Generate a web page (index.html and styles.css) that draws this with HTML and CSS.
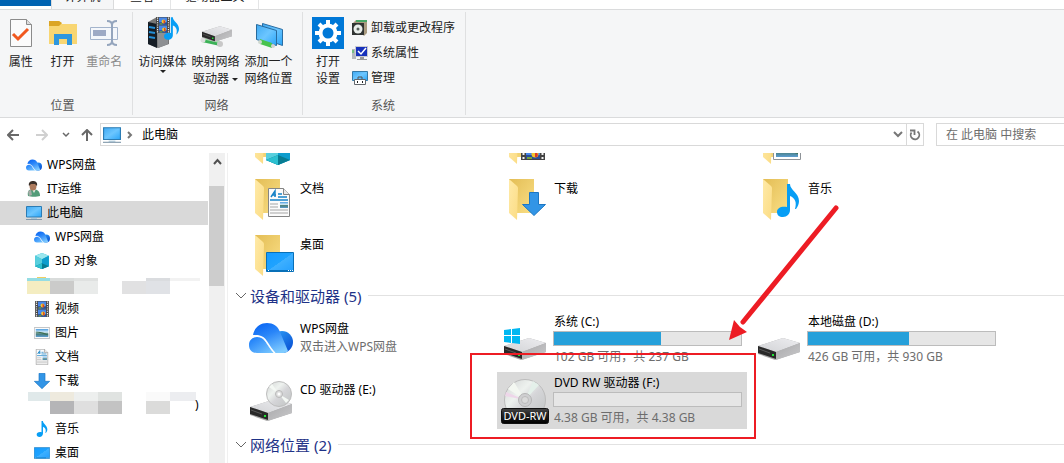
FILE: index.html
```html
<!DOCTYPE html>
<html lang="zh-CN">
<head>
<meta charset="utf-8">
<title>此电脑</title>
<link rel="stylesheet" href="styles.css">
</head>
<body>
<svg class="defs" width="0" height="0" aria-hidden="true">
  <defs>
    <linearGradient id="gSky" x1="0" y1="0" x2="1" y2="1"><stop offset="0" stop-color="#3fa9f2"/><stop offset=".5" stop-color="#6cc6ff"/><stop offset="1" stop-color="#2aa5f8"/></linearGradient>
    <linearGradient id="gCloudA" x1=".2" y1="0" x2=".7" y2="1"><stop offset="0" stop-color="#0a66f4"/><stop offset=".4" stop-color="#2a86f8"/><stop offset="1" stop-color="#7fcbff"/></linearGradient>
    <linearGradient id="gCloudB" x1="0" y1="0" x2="1" y2="1"><stop offset="0" stop-color="#2fa5fa"/><stop offset="1" stop-color="#0648d0"/></linearGradient>
    <linearGradient id="gCloudC" x1="0" y1="0" x2="1" y2="1"><stop offset="0" stop-color="#1678f8"/><stop offset="1" stop-color="#7ccaff"/></linearGradient>
    <linearGradient id="gBack" x1="0" y1="0" x2="1" y2="1"><stop offset="0" stop-color="#e3bd55"/><stop offset="1" stop-color="#fadf86"/></linearGradient>
    <linearGradient id="gFlap" x1="0" y1="0" x2="1" y2="1"><stop offset="0" stop-color="#ffeaa8"/><stop offset="1" stop-color="#fbdc84"/></linearGradient>
    <linearGradient id="gTop" x1="0" y1="1" x2="1" y2="0"><stop offset="0" stop-color="#d2d3d6"/><stop offset="1" stop-color="#ededf0"/></linearGradient>
    <linearGradient id="gSide" x1="0" y1="0" x2="1" y2="1"><stop offset="0" stop-color="#a9a9ab"/><stop offset="1" stop-color="#c9c9cb"/></linearGradient>
    <linearGradient id="gDisc" x1="0" y1="0" x2="1" y2="1"><stop offset="0" stop-color="#d0d2d2"/><stop offset=".35" stop-color="#eef2ef"/><stop offset=".55" stop-color="#d5d5d8"/><stop offset="1" stop-color="#bfc3c2"/></linearGradient>
    <linearGradient id="gDesk" x1="0" y1="0" x2="1" y2="1"><stop offset="0" stop-color="#159bff"/><stop offset=".5" stop-color="#1fa3ff"/><stop offset=".51" stop-color="#3eb0ff"/><stop offset="1" stop-color="#239fff"/></linearGradient>
    <linearGradient id="gPic" x1="0" y1="0" x2="0" y2="1"><stop offset="0" stop-color="#4b9cdf"/><stop offset=".4" stop-color="#d8eefa"/><stop offset=".6" stop-color="#467a74"/><stop offset="1" stop-color="#5d9ed2"/></linearGradient>
    <linearGradient id="gBadge" x1="0" y1="0" x2="0" y2="1"><stop offset="0" stop-color="#454545"/><stop offset=".5" stop-color="#1d1d1d"/><stop offset="1" stop-color="#000"/></linearGradient>
  </defs>
  <symbol id="pc" viewBox="0 0 16 16"><path d="M.5 1.500h15v10.500H.5z" fill="url(#gSky)" stroke="#2b7cb4"/><path d="M5 13h6v1H5z" fill="#a8c8dc"/><path d="M0 14.500h16" stroke="#8098ab"/></symbol>
  <symbol id="cloud" viewBox="0 0 44 30"><circle cx="33" cy="19" r="11" fill="url(#gCloudB)"/><path d="M4 12C5 5 11 0 18 0c6 0 11 3 13 9l8 19c-2 2-4 2-6 2h-7c-3-2-5-5-7-8-3-5-6-10-15-10z" fill="url(#gCloudA)"/><path d="M8 14c5 0 8 3 10 7 2 3 4 6 7 9H8c-5 0-8-3-8-8s4-8 8-8z" fill="url(#gCloudC)"/><path d="M1 15c7-4 13-2 16 3 3 4 5 9 9 12" fill="none" stroke="#fff" stroke-width="1.500"/></symbol>
  <symbol id="person" viewBox="0 0 16 16"><path d="M2 15c-1-5 1-7 5-7s7 2 7 7c-3 1-9 1-12 0z" fill="#539c79"/><path d="M6 8l2 4 2-4z" fill="#e9efe9"/><ellipse cx="7" cy="5" rx="3.500" ry="4.500" fill="#ad7a5c"/><path d="M3 5C2 1 5 0 7 0s5 1 4 5L9 3 5 3z" fill="#3b3029"/><path d="M2 10l3-1 1 5-3 1z" fill="#a6aca8"/></symbol>
  <symbol id="cube" viewBox="0 0 24 28"><path d="M12 0l12 5v18l-12 5L0 23V5z" fill="#1db3cf"/><path d="M12 0l12 5-12 6L0 5z" fill="#9be7ee"/><path d="M0 5l12 6v17L0 23z" fill="#58cfdd"/><path d="M24 5l-12 6v17l12-5z" fill="#0e9dcd"/><path d="M12 18l12 5-12 5-12-5z" fill="#087c92"/><path d="M12 18v10L0 23z" fill="#2cc0d0"/></symbol>
  <symbol id="film" viewBox="0 0 24 28"><path d="M0 0h24v28H0z" fill="#444"/><path d="M5 1h14v12H5zM5 15h14v12H5z" fill="#4787ea"/><path d="M5 9h14v4H5zM5 23h14v4H5z" fill="#294c9a"/><circle cx="13" cy="8" r="3.500" fill="#f2c42e"/><path d="M13 5v6h2c2-2 0-5-2-6z" fill="#d93a28"/><circle cx="14" cy="22" r="3.500" fill="#f2c42e"/><path d="M14 19v6h2c2-2 0-5-2-6z" fill="#d93a28"/><path d="M6 11h5v2H6zM6 25h5v2H6z" fill="#74a33b"/><path d="M2.500 1v27M21.500 1v27" stroke="#f2f2f2" stroke-width="2" stroke-dasharray="2 2"/></symbol>
  <symbol id="picture" viewBox="0 0 28 20"><path d="M.5.500h27v19H.5z" fill="#fff" stroke="#8e9398"/><path d="M3 3h22v14H3z" fill="url(#gPic)"/><path d="M3 9c6 0 12 2 22 5v-1C18 9 9 7 3 8z" fill="#3d6e50"/></symbol>
  <symbol id="doc" viewBox="0 0 22 29"><path d="M.5.500h15l6 6v22H.500z" fill="#fbfbfb" stroke="#858585"/><path d="M15.500.500v6h6" fill="#e7e7e7" stroke="#858585"/><path d="M3 9l4-6v6M4 7h4" fill="none" stroke="#1683c7" stroke-width="1.500"/><path d="M10 6h4M10 9h9M2 12h18" stroke="#1683c7" stroke-width="1.300"/><path d="M2 16h8M2 19h8M2 22h18M2 25h18" stroke="#a5a5a5"/><path d="M12 14h8v6h-8z" fill="url(#gPic)"/></symbol>
  <symbol id="down" viewBox="0 0 24 24"><path d="M7.500.500h9v12h7L12 23.500.500 12.500h7z" fill="#3295e6" stroke="#1c77c4"/></symbol>
  <symbol id="note" viewBox="0 0 22 33"><path d="M10 0h3c0 6 9 9 9 17 0 3-1 5-3 8h-1c2-7 0-11-5-13v14c0 4-3 7-7 7-4 0-6-2-6-5 0-4 4-6 10-5z" fill="#079ef5"/></symbol>
  <symbol id="desktop" viewBox="0 0 28 20"><path d="M.5.500h27v19H.5z" fill="url(#gDesk)" stroke="#0870b8"/><path d="M1 18.500h26" stroke="#0870b8"/><path d="M2 18.500h1M22 18.500h1M24 18.500h1M26 18.500h1" stroke="#fff"/></symbol>
  <symbol id="folder" viewBox="0 0 48 48"><path d="M6 4h25v34H6z" fill="url(#gBack)"/><path d="M6 4l8 7c1 1 1 2 1 3l-1 31-8-7z" fill="url(#gFlap)"/></symbol>
  <symbol id="drive" viewBox="0 0 42 22"><path d="M0 8L25 0l17 5v9l-25 8-17-6z" fill="#aaa"/><path d="M0 8L25 0l17 5-24 9z" fill="url(#gTop)"/><path d="M18 14l24-9v9l-24 8z" fill="url(#gSide)"/><path d="M0 8l18 6v7L0 15z" fill="#292929"/><path d="M1 11l11 4" stroke="#595959"/><path d="M14 16h2v2h-2z" fill="#20e535"/></symbol>
  <symbol id="chev" viewBox="0 0 12 8"><path d="M1 1l5 5 5-5" fill="none" stroke="currentColor"/></symbol>
  <symbol id="arrow" viewBox="0 0 12 12"><path d="M12 6H1M6 1L1 6l5 5" fill="none" stroke="currentColor" stroke-width="2"/></symbol>
</svg>

<header class="tabs">
  <button class="tab file" aria-label="文件"></button>
  <button class="tab active">计算机</button>
  <button class="tab view">查看</button>
  <button class="tab tools">驱动器工具</button>
</header>

<section class="ribbon">
  <div class="group location">
    <div class="tools-row">
      <button class="big">
        <svg width="32" height="32" viewBox="0 0 32 32"><path d="M5.500 2.500h16l5 5v22h-21z" fill="#fbfbfb" stroke="#8b8b8b"/><path d="M21.500 2.500v5h5" fill="#ddd" stroke="#8b8b8b"/><path d="M8 17l5 5L23 12" fill="none" stroke="#f1581e" stroke-width="3"/></svg>
        <span>属性</span></button>
      <button class="big">
        <svg width="32" height="32" viewBox="0 0 32 32"><path d="M2 4h10l3 3h15v20H2z" fill="#f8d673"/><path d="M2 4h10l3 2-3 3H2z" fill="#dba525"/><path d="M7 28V17h18v11h-5v-6h-8v6z" fill="#2e97df"/></svg>
        <span>打开</span></button>
      <button class="big muted">
        <svg width="32" height="32" viewBox="0 0 32 32"><path d="M2.500 10.500h27v12h-27z" fill="#f4f7fb" stroke="#a3b4cc"/><path d="M5 13h13v6H5z" fill="#9daac5"/><path d="M19 4c3 0 5 1 5 4v16c0 3-2 4-5 4M29 4c-3 0-5 1-5 4v16c0 3 2 4 5 4" fill="none" stroke="#94a5bd" stroke-width="2"/></svg>
        <span>重命名</span></button>
    </div>
    <div class="group-name">位置</div>
  </div>
  <div class="group network">
    <div class="tools-row">
      <button class="big">
        <svg width="32" height="32" viewBox="0 0 32 32"><path d="M1 5l9-5 12 5v22l-11 4-10-4z" fill="#777"/><path d="M1 5l9 2v24l-9-4z" fill="#161d25"/><path d="M10 7l11-2v22l-10 4z" fill="#8e9093"/><path d="M2 10l6 1M2 15l6 1M2 20l6 1" stroke="#238fd8" stroke-width="2"/><svg x="8" y="0" width="16" height="16"><use href="#film"/></svg><svg x="17" y="0" width="15" height="23"><use href="#note"/></svg></svg>
        <span>访问媒体</span><i class="caret"></i></button>
      <button class="big">
        <svg width="32" height="32" viewBox="0 0 32 32"><path d="M2 20l18 4v5L2 25z" fill="#3bb157"/><path d="M2 21l18 4" stroke="#a4e3ab" stroke-width="2"/><circle cx="3" cy="23" r="2.500" fill="#ddd"/><circle cx="20" cy="27" r="3" fill="#c8c8c8"/><svg x="2" y="9" width="30" height="16"><use href="#drive"/></svg></svg>
        <span>映射网络<br>驱动器 <i class="caret inline"></i></span></button>
      <button class="big">
        <svg width="32" height="32" viewBox="0 0 32 32"><path d="M9.500 6.500l20 6v16l-20-7z" fill="url(#gSky)" stroke="#2a6da3"/><path d="M3.500 7.500l20 6v15l-20-6z" fill="url(#gSky)" stroke="#286a9c"/><path d="M7 22l12 4v5L7 27z" fill="#48c34e"/><circle cx="7" cy="25" r="2" fill="#cfd8d0"/><circle cx="20" cy="29" r="2" fill="#d2d2d2"/></svg>
        <span>添加一个<br>网络位置</span></button>
    </div>
    <div class="group-name">网络</div>
  </div>
  <div class="group system">
    <div class="tools-row">
      <button class="big">
        <svg width="32" height="32" viewBox="0 0 32 32"><path d="M0 0h32v32H0z" fill="#0078d7"/><circle cx="16" cy="16" r="7.500" fill="none" stroke="#fff" stroke-width="4"/><g stroke="#fff" stroke-width="4"><path d="M16 3v4M16 25v4M3 16h4M25 16h4M7 7l3 3M22 22l3 3M7 25l3-3M22 10l3-3"/></g></svg>
        <span>打开<br>设置</span></button>
      <div class="stack">
        <button class="small"><svg width="16" height="16" viewBox="0 0 16 16"><path d="M1 3l3-3h11v13l-3 3z" fill="#a99b80"/><path d="M4 0h11v2H4z" fill="#48a867"/><path d="M0 3h12v12H0z" fill="#303432"/><circle cx="6" cy="9" r="4.500" fill="#e9eeeb"/><circle cx="6" cy="9" r="1.500" fill="#59615c"/></svg><span>卸载或更改程序</span></button>
        <button class="small"><svg width="16" height="16" viewBox="0 0 16 16"><path d="M0 4h4v10H0z" fill="#b5b8bd"/><path d="M3.500 1.500h12v10h-12z" fill="#1731bb" stroke="#c9cbd0"/><path d="M6 6l3 3 5-6" fill="none" stroke="#fff" stroke-width="1.500"/><path d="M8 12h4v2h3v1H5v-1h3z" fill="#999"/><path d="M1 5v3" stroke="#39c449"/></svg><span>系统属性</span></button>
        <button class="small"><svg width="16" height="16" viewBox="0 0 16 16"><path d="M.5 1.500h15v9H.5z" fill="url(#gSky)" stroke="#357aa8"/><path d="M2.500 9.500h11v5h-11z" fill="#fff" stroke="#62676c"/><path d="M6 9V7h4v2" fill="none" stroke="#555"/><path d="M5 11h1v2H5zM10 11h1v2h-1z" fill="#222"/></svg><span>管理</span></button>
      </div>
    </div>
    <div class="group-name">系统</div>
  </div>
</section>

<nav class="address-row">
  <button class="go" aria-label="后退"><svg width="12" height="12"><use href="#arrow"/></svg></button>
  <button class="go off" aria-label="前进"><svg class="flip" width="12" height="12"><use href="#arrow"/></svg></button>
  <button class="go narrow" aria-label="最近"><svg width="8" height="6" viewBox="0 0 8 6"><path d="M1 1l3 3 3-3" fill="none" stroke="currentColor" stroke-width="1.500"/></svg></button>
  <button class="go up" aria-label="向上"><svg class="turn" width="12" height="12"><use href="#arrow"/></svg></button>
  <div class="address">
    <svg width="18" height="18"><use href="#pc"/></svg>
    <svg class="sep" width="6" height="8" viewBox="0 0 6 8"><path d="M1 1l3 3-3 3" fill="none" stroke="#777" stroke-width="2"/></svg>
    <a href="#" class="crumb">此电脑</a>
    <button class="history" aria-label="历史"><svg width="10" height="7" viewBox="0 0 10 7"><path d="M1 1l4 4 4-4" fill="none" stroke="#777" stroke-width="2"/></svg></button>
    <button class="refresh" aria-label="刷新"><svg width="12" height="12" viewBox="0 0 12 12"><path d="M8.500 2.500a4.300 4.300 0 1 1-6 1" fill="none" stroke="#777" stroke-width="1.800"/><path d="M1 1.500h4.500v4.500" fill="none" stroke="#777" stroke-width="1.800"/></svg></button>
  </div>
  <input class="search" type="search" aria-label="搜索" placeholder="在 此电脑 中搜索">
</nav>

<div class="body">
  <aside class="tree">
    <a href="#" class="node"><svg width="16" height="16"><use href="#cloud"/></svg>WPS网盘</a>
    <a href="#" class="node"><svg width="16" height="16"><use href="#person"/></svg>IT运维</a>
    <a href="#" class="node selected"><svg width="16" height="16"><use href="#pc"/></svg>此电脑</a>
    <a href="#" class="node child"><svg width="16" height="16"><use href="#cloud"/></svg>WPS网盘</a>
    <a href="#" class="node child"><svg width="16" height="16"><use href="#cube"/></svg>3D 对象</a>
    <div class="node hidden-name"><svg width="208" height="24" viewBox="0 0 208 24" shape-rendering="crispEdges"><path d="M37 4h9v1h-9z" fill="#f2ce62"/><path d="M27 5h23v3H27z" fill="#95dde3"/><path d="M50 5h24v3H50z" fill="#d9dcdb"/><path d="M74 5h24v3H74z" fill="#dfe1e0"/><path d="M27 8h23v13H27z" fill="#f4edc1"/><path d="M50 8h24v13H50z" fill="#cbcbca"/><path d="M74 8h24v13H74z" fill="#e9ebea"/><path d="M122 8h24v13h-24z" fill="#e1e1e2"/><path d="M146 5h24v16h-24z" fill="#e0e2e6"/><path d="M146 5h24v3h-24z" fill="#dadcdf"/><path d="M170 5h30v3h-30z" fill="#f2f2f2"/></svg></div>
    <a href="#" class="node child"><svg width="16" height="16"><use href="#film"/></svg>视频</a>
    <a href="#" class="node child"><svg width="16" height="16"><use href="#picture"/></svg>图片</a>
    <a href="#" class="node child"><svg width="16" height="16"><use href="#doc"/></svg>文档</a>
    <a href="#" class="node child"><svg width="16" height="16"><use href="#down"/></svg>下载</a>
    <div class="node hidden-name tail"><svg width="195" height="24" viewBox="0 0 195 24" shape-rendering="crispEdges"><path d="M28-1h22v9H28z" fill="#e0e9ea"/><path d="M50-1h24v9H50z" fill="#eeeade"/><path d="M74-1h24v9H74z" fill="#edefee"/><path d="M98-1h24v9H98z" fill="#e0e3e1"/><path d="M146-1h24v9h-24z" fill="#fafafa"/><path d="M170-1h26v9h-26z" fill="#ecedf0"/><path d="M50 8h24v13H50z" fill="#b5b5b7"/><path d="M74 8h24v13H74z" fill="#dfdfdf"/><path d="M98 8h24v13H98z" fill="#c3c3c3"/><path d="M146 8h24v13h-24z" fill="#dbdbda"/></svg><span>)</span></div>
    <a href="#" class="node child"><svg width="16" height="16"><use href="#note"/></svg>音乐</a>
    <a href="#" class="node child"><svg width="16" height="16"><use href="#desktop"/></svg>桌面</a>
  </aside>
  <div class="scroll"><button class="scroll-up" aria-label="向上滚动"><svg width="9" height="7" viewBox="0 0 9 7"><path d="M1 6l3.500-4L8 6" fill="none" stroke="#505050" stroke-width="2"/></svg></button><div class="thumb"></div></div>

  <main class="content">
    <div class="tiles folders">
      <div class="tile"><svg class="pic"><use href="#folder"/><svg x="17" y="18" width="24" height="28"><use href="#cube"/></svg></svg><div class="info"></div></div>
      <div class="tile"><svg class="pic"><use href="#folder"/><svg x="18" y="13" width="24" height="28"><use href="#film"/></svg></svg><div class="info"></div></div>
      <div class="tile"><svg class="pic"><use href="#folder"/><svg x="16" y="21" width="28" height="20"><use href="#picture"/></svg></svg><div class="info"></div></div>
      <div class="tile"><svg class="pic"><use href="#folder"/><svg x="19" y="13" width="22" height="29"><use href="#doc"/></svg></svg><div class="info"><div>文档</div></div></div>
      <div class="tile"><svg class="pic"><use href="#folder"/><svg x="19" y="17" width="24" height="24"><use href="#down"/></svg></svg><div class="info"><div>下载</div></div></div>
      <div class="tile"><svg class="pic"><use href="#folder"/><svg x="20" y="9" width="22" height="33"><use href="#note"/></svg></svg><div class="info"><div>音乐</div></div></div>
      <div class="tile"><svg class="pic"><use href="#folder"/><svg x="17" y="21" width="28" height="20"><use href="#desktop"/></svg></svg><div class="info"><div>桌面</div></div></div>
    </div>
    <h2 class="section"><svg width="12" height="8"><use href="#chev"/></svg>设备和驱动器 (5)</h2>
    <div class="tiles devices">
      <div class="tile"><svg class="pic"><svg y="8" width="44" height="30"><use href="#cloud"/></svg></svg><div class="info"><div>WPS网盘</div><div class="sub">双击进入WPS网盘</div></div></div>
      <div class="tile"><svg class="pic"><svg x="1" y="23" width="42" height="22"><use href="#drive"/></svg><path d="M1 15l7-1v6H1zM9 14l8-1v7H9zM1 21h7v7l-7-1zM9 21h8v8l-8-1z" fill="#00b7f1"/></svg><div class="info drive"><div>系统 (C:)</div><div class="bar"><div class="used" style="width:57%"></div></div><div class="sub">102 GB 可用，共 237 GB</div></div></div>
      <div class="tile"><svg class="pic"><svg x="1" y="23" width="42" height="22"><use href="#drive"/></svg></svg><div class="info drive"><div>本地磁盘 (D:)</div><div class="bar"><div class="used" style="width:54%"></div></div><div class="sub">426 GB 可用，共 930 GB</div></div></div>
      <div class="tile"><svg class="pic"><svg x="1" y="23" width="42" height="22"><use href="#drive"/></svg><circle cx="30" cy="18" r="12.500" fill="url(#gDisc)" stroke="#bdbdbd"/><path d="M30 18L20 11l3-3zM30 18l10 6-3 3z" fill="#f4f8f4"/><circle cx="30" cy="18" r="3.500" fill="#dedede" stroke="#b9b9b9"/><circle cx="30" cy="18" r="1.500" fill="#fff"/></svg><div class="info"><div>CD 驱动器 (E:)</div></div></div>
      <div class="tile selected"><svg class="pic"><circle cx="22" cy="24" r="20.500" fill="url(#gDisc)" stroke="#bcbcbc"/><path d="M22 24L5 13l6-7z" fill="#f3f7f1"/><path d="M22 24L30 5l6 4z" fill="#e4f0ea"/><path d="M22 24L2 20l1-4z" fill="#eed6e9"/><circle cx="22" cy="24" r="6.500" fill="#cfcfd1" stroke="#b5b5b5"/><circle cx="22" cy="24" r="3.500" fill="#dadada" stroke="#bbb"/><rect x="-1.500" y="32.500" width="47" height="15" rx="2" fill="url(#gBadge)" stroke="#111"/><text x="22" y="44" class="badge">DVD-RW</text></svg><div class="info drive"><div>DVD RW 驱动器 (F:)</div><div class="bar"></div><div class="sub">4.38 GB 可用，共 4.38 GB</div></div>
        <div class="mark"></div>
        <svg class="pointer" width="120" height="140" viewBox="0 0 120 140"><path d="M111 6L18 120" stroke="#ed1c24" stroke-width="5" stroke-linecap="round"/><path d="M4 138l5-20 6 7 7 5z" fill="#ed1c24"/></svg>
      </div>
    </div>
    <h2 class="section"><svg width="12" height="8"><use href="#chev"/></svg>网络位置 (2)</h2>
  </main>
</div>
</body>
</html>
```

FILE: styles.css
```css
* { box-sizing: border-box; }
body {
  margin: 0;
  height: 100vh;
  display: flex;
  flex-direction: column;
  overflow: hidden;
  background: #fff;
  color: #000;
  font: 12px/18px "Noto Sans", "Noto Sans CJK SC", sans-serif;
}
button {
  margin: 0;
  padding: 0;
  border: 0;
  background: none;
  font: inherit;
  color: inherit;
}
a { color: inherit; text-decoration: none; }
svg { display: block; flex: none; }
.defs { position: absolute; }

.tabs {
  flex: none;
  display: flex;
  align-items: flex-end;
  height: 10px;
  overflow: hidden;
  border-bottom: 1px solid #dadbdc;
}
.tab { height: 24px; color: #222; line-height: 16px; white-space: nowrap; }
.tab.file { width: 51px; border-bottom: 3px solid #fff; background: #0063b1; }
.tab.active { width: 63px; border: 1px solid #dadbdc; border-width: 0 1px; background: #f5f6f7; }
.tab.view { width: 57px; border-right: 1px solid #e4e5e6; }
.tab.tools { width: 88px; border-right: 1px solid #e4e5e6; }

.ribbon {
  flex: none;
  display: flex;
  height: 108px;
  padding: 2px 0;
  border-bottom: 1px solid #dadbdc;
  background: #f5f6f7;
  color: #222;
}
.group {
  display: flex;
  flex-direction: column;
  justify-content: space-between;
  border-right: 1px solid #dfe0e1;
}
.tools-row { display: flex; padding-top: 5px; }
.group-name { color: #555; text-align: center; }
.location { width: 133px; padding-right: 7px; }
.network { width: 170px; padding: 0 5px 0 3px; }
.system { width: 163px; padding-left: 4px; }
.system .group-name { padding-right: 6px; }
.big {
  display: flex;
  flex-direction: column;
  align-items: center;
  width: 42px;
  line-height: 17px;
  white-space: nowrap;
}
.big > svg { margin-bottom: 4px; }
.network .big { width: 53px; }
.muted { color: #8b8b8b; }
.caret { border: 3px solid transparent; border-top-color: #222; border-bottom: 0; }
.caret.inline { display: inline-block; vertical-align: middle; }
.stack { display: flex; flex-direction: column; gap: 7px; padding: 2px 0 0 3px; }
.small { display: flex; align-items: center; gap: 3px; line-height: 18px; white-space: nowrap; }

.address-row {
  flex: none;
  display: flex;
  align-items: center;
  height: 35px;
  padding-bottom: 2px;
}
.go { display: grid; place-items: center; width: 28px; height: 22px; padding-right: 2px; color: #686868; }
.go.off { width: 30px; color: #d0d0d0; }
.go.narrow { width: 18px; }
.go.up { width: 24px; }
.flip { transform: scaleX(-1); }
.turn { transform: rotate(90deg); }
.address {
  flex: 1;
  display: flex;
  align-items: center;
  height: 23px;
  margin-right: 12px;
  padding-left: 2px;
  border: 1px solid #d9d9d9;
}
.sep { margin: 0 9px 0 6px; }
.crumb { flex: 1; }
.history { display: grid; place-items: center; width: 17px; height: 21px; }
.refresh { display: grid; place-items: center; width: 17px; height: 21px; border-left: 1px solid #d9d9d9; }
.search {
  width: 128px;
  height: 23px;
  padding: 0 0 0 9px;
  border: 1px solid #d9d9d9;
  border-right: 0;
  border-radius: 0;
  font: inherit;
  outline: 0;
}
.search::placeholder { color: #6d6d6d; opacity: 1; }

.body { flex: 1; min-height: 0; display: flex; }
.tree { flex: none; width: 209px; overflow: hidden; }
.node {
  display: flex;
  align-items: center;
  gap: 5px;
  height: 24px;
  margin-right: 1px;
  padding-left: 26px;
  padding-bottom: 1px;
}
.node.child { padding-left: 34px; }
.node.selected { background: #d9d9d9; }
.node.hidden-name { padding: 0; gap: 0; }
.hidden-name svg { overflow: visible; }
.scroll { flex: none; width: 16px; background: #f0f0f0; }
.scroll-up { display: grid; place-items: center; width: 16px; height: 17px; }
.thumb { width: 15px; height: 100px; margin-top: 16px; background: #cdcdcd; }

.content {
  flex: 1;
  min-width: 0;
  margin-left: 2px;
  overflow: hidden;
  border-left: 1px solid #f0f0f0;
}
.tiles { display: grid; grid-template-columns: repeat(auto-fill, 250px); column-gap: 4px; margin-left: 15px; }
/* the list is scrolled part of one row */
.folders { grid-auto-rows: 56px; margin-top: -38px; }
.devices { grid-auto-rows: 57px; row-gap: 4px; }
.tile { position: relative; display: flex; gap: 3px; padding: 4px 0 0 6px; }
.tile.selected { background: #d9d9d9; }
.pic { width: 48px; height: 48px; overflow: visible; }
.info { flex: 1; padding: 5px 5px 0 0; }
.info.drive { margin-top: -2px; padding-top: 0; }
.sub { color: #6d6d6d; }
.bar { height: 15px; margin: 0 0 2px -1px; border: 1px solid #bcbcbc; background: #e6e6e6; }
.used { height: 100%; background: #26a0da; }
.badge { fill: #fff; font-size: 11px; text-anchor: middle; }
.section {
  display: flex;
  align-items: center;
  gap: 3px;
  height: 28px;
  margin: 0;
  padding: 0 0 3px 7px;
  color: #1e3287;
  font-size: 15px;
  font-weight: 400;
  line-height: 20px;
}
.section svg { color: #666; }
.section::after { content: ""; flex: 1; height: 1px; margin-left: 4px; background: #e2e2e2; }
.devices + .section { margin-top: 3px; }

.mark { position: absolute; inset: -19px -9px -10px -27px; border: 2px solid #ed1c24; }
.pointer { position: absolute; left: 228px; top: -170px; z-index: 1; }
```
